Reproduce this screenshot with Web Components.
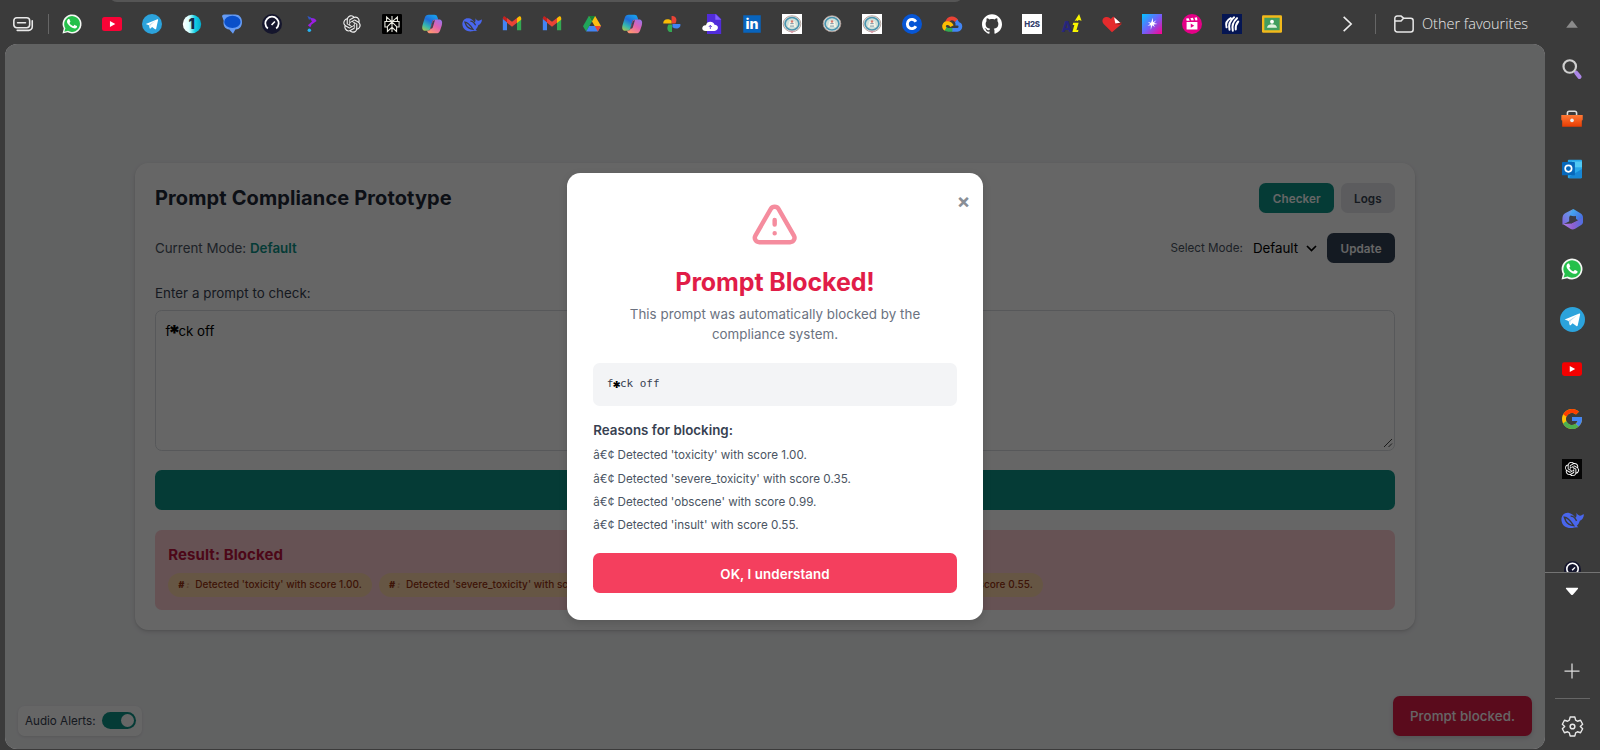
<!DOCTYPE html>
<html lang="en">
<head>
<meta charset="utf-8">
<title>Prompt Compliance Prototype</title>
<style>
html,body{margin:0;height:100%;background:#3b3b3b;overflow:hidden}
body{font-family:Inter,"Noto Sans",sans-serif}
</style>
</head>
<body>
<browser-window></browser-window>
<script>
const define=(name,html)=>{
  const t=document.createElement('template');
  t.innerHTML=html;
  customElements.define(name,class extends HTMLElement{
    constructor(){super();this.attachShadow({mode:'open'}).append(t.content.cloneNode(true));}
  });
};

const OPENAI='M22.2819 9.8211a5.9847 5.9847 0 0 0-.5157-4.9108 6.0462 6.0462 0 0 0-6.5098-2.9A6.0651 6.0651 0 0 0 4.9807 4.1818a5.9847 5.9847 0 0 0-3.9977 2.9 6.0462 6.0462 0 0 0 .7427 7.0966 5.98 5.98 0 0 0 .511 4.9107 6.051 6.051 0 0 0 6.5146 2.9001A5.9847 5.9847 0 0 0 13.2599 24a6.0557 6.0557 0 0 0 5.7718-4.2058 5.9894 5.9894 0 0 0 3.9977-2.9001 6.0557 6.0557 0 0 0-.7475-7.0729zm-9.022 12.6081a4.4755 4.4755 0 0 1-2.8764-1.0408l.1419-.0804 4.7783-2.7582a.7948.7948 0 0 0 .3927-.6813v-6.7369l2.02 1.1686a.071.071 0 0 1 .038.052v5.5826a4.504 4.504 0 0 1-4.4945 4.4944zm-9.6607-4.1254a4.4708 4.4708 0 0 1-.5346-3.0137l.142.0852 4.783 2.7582a.7712.7712 0 0 0 .7806 0l5.8428-3.3685v2.3324a.0804.0804 0 0 1-.0332.0615L9.74 19.9502a4.4992 4.4992 0 0 1-6.1408-1.6464zM2.3408 7.8956a4.485 4.485 0 0 1 2.3655-1.9728V11.6a.7664.7664 0 0 0 .3879.6765l5.8144 3.3543-2.0201 1.1685a.0757.0757 0 0 1-.071 0l-4.8303-2.7865A4.504 4.504 0 0 1 2.3408 7.872zm16.5963 3.8558L13.1038 8.364 15.1192 7.2a.0757.0757 0 0 1 .071 0l4.8303 2.7913a4.4944 4.4944 0 0 1-.6765 8.1042v-5.6772a.79.79 0 0 0-.407-.667zm2.0107-3.0231l-.142-.0852-4.7735-2.7818a.7759.7759 0 0 0-.7854 0L9.409 9.2297V6.8974a.0662.0662 0 0 1 .0284-.0615l4.8303-2.7866a4.4992 4.4992 0 0 1 6.6802 4.66zM8.3065 12.863l-2.02-1.1638a.0804.0804 0 0 1-.038-.0567V6.0742a4.4992 4.4992 0 0 1 7.3757-3.4537l-.142.0805L8.704 5.459a.7948.7948 0 0 0-.3927.6813zm1.0976-2.3654l2.602-1.4998 2.6069 1.4998v2.9994l-2.5974 1.4997-2.6067-1.4997Z';
const PHONE='M17.472 14.382c-.297-.149-1.758-.867-2.03-.967-.273-.099-.471-.148-.67.15-.197.297-.767.966-.94 1.164-.173.199-.347.223-.644.075-.297-.15-1.255-.463-2.39-1.475-.883-.788-1.48-1.761-1.653-2.059-.173-.297-.018-.458.13-.606.134-.133.298-.347.446-.52.149-.174.198-.298.298-.497.099-.198.05-.371-.025-.52-.075-.149-.669-1.612-.916-2.207-.242-.579-.487-.5-.669-.51-.173-.008-.371-.01-.57-.01-.198 0-.52.074-.792.372-.272.297-1.04 1.016-1.04 2.479 0 1.462 1.065 2.875 1.213 3.074.149.198 2.096 3.2 5.077 4.487.709.306 1.262.489 1.694.625.712.227 1.36.195 1.871.118.571-.085 1.758-.719 2.006-1.413.248-.694.248-1.289.173-1.413-.074-.124-.272-.198-.57-.347z';
const grad=(id,a,v='x1="0" y1="0" x2="1" y2="1"')=>`<linearGradient id="${id}" ${v}>${a.map((c,i)=>`<stop offset="${i/(a.length-1)}" stop-color="${c}"/>`).join('')}</linearGradient>`;
const seal=`<ellipse cx="12" cy="11.7" rx="10.6" ry="9.600" fill="#e3e6e4" stroke="#a8958f" stroke-width="1"/><ellipse cx="12" cy="11.7" rx="8.300" ry="7.500" fill="#cfe0da" stroke="#4a93ad" stroke-width="2"/><path d="M7 15.500 9 8.500h6l2 7z" fill="#f5f3e8"/><path d="M9.500 14.500h5M10 11.500h4" stroke="#7f9aa8" stroke-width="1.200"/><circle cx="12" cy="9" r="1.500" fill="#d97b6f"/>`;
/* Glyphs are drawn on a 24-unit square. */
const ICONS={
 tabs:'<g fill="none" stroke="#e8e8e8" stroke-width="1.900"><rect x="1" y="4.500" width="19" height="12" rx="3.500"/><path d="M5.500 10.500h9.500M5 19.600h13.800a4.200 4.200 0 0 0 4.300-4.300V8" stroke-linecap="round"/></g>',
 whatsapp:`<path d="M.6 23.500 2.100 17.500A11.400 11.400 0 1 1 6.700 22z" fill="#f5f8f4"/><path d="M2.800 21.300 4.100 17.200A9.500 9.500 0 1 1 7.200 20.200z" fill="#25c04b"/><path d="${PHONE}" fill="#fff" transform="translate(0 -.3)"/>`,
 youtube:'<rect x="0" y="3.500" width="24" height="17" rx="3" fill="#f80336"/><path d="m9.500 8.400 6.500 3.600-6.500 3.600z" fill="#fff"/>',
 youtubeside:'<rect x="0" y="3.800" width="24" height="16.500" rx="2.800" fill="#f40000"/><path d="m9.300 8.500 6.500 3.500-6.500 3.500z" fill="#fff"/>',
 telegram:'<circle cx="12" cy="12" r="12" fill="#2ca3dc"/><path d="M4.500 11.900 18.500 6.300c.7-.2 1 .1.800.9L17 17.700c-.2.800-.7.900-1.300.5l-3.600-2.700-1.900 1.900c-.5.400-.9.100-1-.400L8.300 13.400z" fill="#fff"/><path d="m9.700 16.500.4-3.100 6-5.200-7.500 4.700z" fill="#b9d9eb"/>',
 one:`<defs>${grad('g',['#fff','#d8ffff','#10cfe4','#05aacc'],'x1="0" y1="0" x2="1" y2="0"')}</defs><circle cx="12" cy="12" r="11" fill="url(#g)"/><text x="11.500" y="18.300" text-anchor="middle" font-family="Inter" font-weight="900" font-size="17" fill="#152848">1</text>`,
 messages:'<path d="M5 .5h11c5 0 8 4 8 9 0 5.500-3 9-8 9l-2.800 5.300-4.400-5.300C3 18 1 13 2 8L0 2.500C0 1 2 .5 5 .5z" fill="#659bf4"/><ellipse cx="12.500" cy="9.500" rx="9.800" ry="7.300" fill="#0a4fc9"/>',
 speed:'<circle cx="12" cy="12" r="12" fill="#15162d"/><path d="M7 17.400a8 8 0 1 1 10 0" fill="none" stroke="#fff" stroke-width="2.200"/><path d="m11.500 13.200 4-4.200" stroke="#fff" stroke-width="2"/>',
 question:`<defs>${grad('g',['#6535e9','#a21be0','#6b39ef'])}</defs><path d="M9.500 5C14 4.500 16.500 6 17.500 8.500L11.500 12.500l-1.500 3.500-3-2.500L12 9z" fill="url(#g)"/><path d="m6.500 2.500 4.500 1.700-2.500 3z" fill="#3156c4"/><circle cx="8.800" cy="19.500" r="2.100" fill="#25b4f2"/>`,
 openai:`<g transform="translate(1.500 1.500) scale(.875)"><path d="${OPENAI}" fill="#eee"/></g>`,
 openaibox:`<rect width="24" height="24" fill="#050505"/><g transform="translate(3.500 3.500) scale(.710)"><path d="${OPENAI}" fill="#fff"/></g>`,
 perplexity:'<rect width="24" height="24" rx="1.500" fill="#000"/><g fill="none" stroke="#e8e8df" stroke-width="1.300"><path d="M12 2.500v19M5.500 3.500v5.500h13V3.500L12 9.500zM5.500 9H3.500v6.500h3M18.500 9h2v6.500h-3M12 9.500l-5.500 5.500v6L12 16l5.500 5v-6z"/></g>',
 copilot:`<defs>${grad('a',['#1799ea','#216bd8','#34b7b0','#bdc840'],'x1=".6" y1="0" x2="0" y2="1"')}${grad('b',['#8d76f5','#e062b1','#ff9671'],'x1="1" y1="0" x2=".3" y2="1"')}</defs><path d="M8 1h7c2 0 3 1 3.600 3L19.500 7h-4c-2 0-3 .8-3.500 3l-2 7.500c-.5 1.700-1.500 2.500-3 2.500H3.500C.5 20-.5 17 .8 12.800L3.300 4.500C4 2.300 5.500 1 8 1z" fill="url(#a)"/><path d="M16 6.500h4.500c3.500 0 4.300 3 3.200 7.200l-2 6c-.8 2.300-2.400 3.500-4.700 3.500H9.500c-1.700 0-2.700-.9-3.400-3.200h.7c2 0 3-.8 3.500-2.700L12.400 9c.5-1.700 1.600-2.500 3.600-2.500z" fill="url(#b)"/><path d="m12.500 9.500-2.300 8c.8.500 2.200.300 2.800-1.500L15.500 7.500c-1.700 0-2.500.6-3 2z" fill="#474052"/>`,
 deepseek:'<path d="M.5 13C0 7.500 4 4.200 8.500 5.200c2.700.5 5.200 2.700 6.400 5 1.300-.4 1.600-2.700 1.100-5.200 1.300 1.800 2.200 2.700 3.700 3 1.700.1 2.500-1.200 4.300-1.500-.3 4-2.300 6-4.300 6.700-.8 2.300-1.700 4.100-3.200 5.300l1.500 1.500-4 .3C8 22 1.300 20 .5 13z" fill="#4966ed"/><path d="M3.500 9.700c3.500-.1 6.800 4.300 9.700 8.700-3-.4-6.700-2.300-8.200-5zM10 8.500c3-.2 5.200 2.800 6.300 5" fill="none" stroke="#3b3b3b" stroke-width="1.500"/>',
 gmail:'<path d="M1 5v14.500h5V10z" fill="#4285f4"/><path d="M18 9.500v10h5V5z" fill="#34a853"/><path d="m1 6 5 4v-5L3.500 3C2 2.400 1 3.500 1 6z" fill="#c5221f"/><path d="M6 4.800 12 9.300l6-4.500v5.800l-6 4.600-6-4.600z" fill="#ea4335"/><path d="M18 4.800 20 3.200C22 2 23 3.600 23 5v2l-5 3.800z" fill="#fbbc04"/>',
 drive:'<path d="M8.200 2.500h7.600L5 21 1.200 14.600z" fill="#20a55a"/><path d="m15.800 2.500 7 12h-7.600L8.200 2.500z" fill="#fdbd13"/><path d="M5 21 8.700 14.500h14.100L19 21z" fill="#4285f4"/><path d="M8.200 2.500h7.600L12 9z" fill="#188038"/><path d="m19 21-3.800-6.500h7.600z" fill="#ea4335"/>',
 photos:'<path d="M11.500 11.500V2.500c5-1 7.500 4 4.500 9z" fill="#e94335"/><path d="M12.500 12H22c1 5-4.500 7-9.500 4z" fill="#4285f4"/><path d="M12 12.500v9c-5.500 1-7-4.500-4.200-9z" fill="#34a853"/><path d="M11.500 11.500h-10c-.5-5 5-7 10-3.500z" fill="#fbbc04"/>',
 cloudfile:'<path d="M6 0h11l6 6v18H6z" fill="#512cda"/><path d="M16 0v7h7z" fill="#825fff"/><path d="M4.500 20.500c-7-1-4-8 .3-7C5.500 8 14 8 15 13c5.500 0 5.500 7 0 7.500z" fill="#fff"/><path d="M10 18v-4m-1.800 1.600L10 13.500l1.800 2.100" stroke="#5631ce" fill="none"/>',
 linkedin:'<rect x="1.500" y="1.500" width="21" height="21" fill="#0864bd"/><text x="12" y="18.500" text-anchor="middle" font-family="Inter" font-size="17" font-weight="800" fill="#fff">in</text>',
 sealbox:`<rect width="24" height="24" fill="#fff"/>${seal}<path d="m8 20 4 3 4-3" fill="#d79ba6"/>`,
 seal,
 coursera:'<circle cx="12" cy="12" r="12" fill="#0756d5"/><path d="M16.700 9.300a5.500 5.500 0 1 0 0 5.400" fill="none" stroke="#fff" stroke-width="3.500"/>',
 gcloud:'<g fill="none" stroke-width="4.500"><path d="M6 10c2-5.800 8.500-6.500 11.500-1.500" stroke="#ea4335"/><path d="M16.800 8.300c1.300 1 1.600 2 1.600 3.200 5.200 0 4.600 7.500 0 7.500H12" stroke="#4285f4"/><path d="M12.500 19H7.500c-2 0-3.200-1-4.500-2.500" stroke="#34a853"/><path d="M12 14.500C9 9 1.500 10.500 2.500 15.500c.3 1.500 1 2.300 1.700 2.700" stroke="#fbbc04"/></g>',
 github:'<path fill="#fff" d="M12 .297c-6.630 0-12 5.373-12 12 0 5.303 3.438 9.800 8.205 11.385.600.113.820-.258.820-.577 0-.285-.010-1.040-.015-2.040-3.338.724-4.042-1.610-4.042-1.610C4.422 18.070 3.633 17.700 3.633 17.700c-1.087-.744.084-.729.084-.729 1.205.084 1.838 1.236 1.838 1.236 1.070 1.835 2.809 1.305 3.495.998.108-.776.417-1.305.760-1.605-2.665-.300-5.466-1.332-5.466-5.930 0-1.310.465-2.380 1.235-3.220-.135-.303-.540-1.523.105-3.176 0 0 1.005-.322 3.300 1.230.960-.267 1.980-.399 3-.405 1.020.006 2.040.138 3 .405 2.280-1.552 3.285-1.230 3.285-1.230.645 1.653.240 2.873.120 3.176.765.840 1.230 1.910 1.230 3.220 0 4.610-2.805 5.625-5.475 5.920.420.360.810 1.096.810 2.220 0 1.606-.015 2.896-.015 3.286 0 .315.210.690.825.570C20.565 22.092 24 17.592 24 12.297c0-6.627-5.373-12-12-12"/>',
 h2s:'<rect width="24" height="24" fill="#fff"/><text x="12" y="15.500" text-anchor="middle" font-family="Inter" font-size="9.500" font-weight="800" letter-spacing="-.3" fill="#34406b">H2S</text>',
 ai:'<text x="-.5" y="21.500" font-family="Inter" font-size="17" font-weight="800" fill="#27267c">A</text><path d="m20.500 0 3 8-3.300-.7-2.200 1.500-.5-1.200-2.500 1z" fill="#f8f500"/><path d="M13.500 10.500h6.500l-2.700 9 2.500-.5-.6 2.500h-6.700l2.300-8.300h-2z" fill="#f8f500"/>',
 heart:'<path d="M12 22 2 12C-1 8 1 4 5 3.500c3-.3 4.500 1 5.500 2.500L13.500 3l10 9z" fill="#e42b2d"/><path d="m14.500 4 8.500 7.500h-7z" fill="#fff"/><path d="m15 12 9-2-2 3z" fill="#95221f"/>',
 spark:`<defs>${grad('g',['#00c6ff','#7060fb','#ff008e'])}</defs><rect width="24" height="24" fill="url(#g)"/><path d="m13 4.500.3 5.300 4-2.300-2.800 3.400 4 1.100-4.600.5 1.500 3.500-3-2.500-1.900 5.500.1-5.500-4.100.5 3.500-2-3-2.500 3.800 1z" fill="#fff"/>`,
 reels:'<circle cx="12" cy="12" r="12" fill="#e50087"/><path d="M5.500 9.500h13v9h-13zM5 5.500l3-.5 1.300 3H5.500zM10 5l3-.4 1.300 2.900-3 .4zM15 4.500l3-.5.500 3.500-2.300.3z" fill="#fff"/><path d="m10.500 11.500 4.200 2.500-4.200 2.500z" fill="#e50087"/>',
 stripes:'<rect width="24" height="24" fill="#051653"/><g fill="none" stroke="#fff" stroke-width="2.400" stroke-linecap="round"><path d="M10.500 5C6 7.500 4 11.500 5.500 16M14.500 4C9.500 8 7.500 13 9 19M18 5c-4.500 4-6.500 9-5 15M19.500 9c-2.500 3-3.500 6-3 9.500"/></g>',
 classroom:'<rect x="0" y="1.500" width="24" height="21" rx="1.500" fill="#f2b91b"/><rect x="2.800" y="4.500" width="18.400" height="15" fill="#419e5f"/><circle cx="12" cy="9.300" r="2.300" fill="#fff"/><path d="M6 16.500c.3-5.500 11.700-5.500 12 0z" fill="#e0f1df"/>',
 search:'<path d="m17 16.500 4 5" stroke="#ab86e6" stroke-width="5" stroke-linecap="round"/><circle cx="9.300" cy="9" r="7.500" fill="none" stroke="#cfcfcf" stroke-width="2.600"/>',
 briefcase:`<defs>${grad('g',['#ff7a36','#e73b02'],'x1="0" y1="0" x2="0" y2="1"')}</defs><path d="M7 8V5.500c0-1.500.7-2 2-2h6c1.300 0 2 .5 2 2V8" fill="none" stroke="#ddd" stroke-width="1.700"/><path d="M.3 7.500h23.400v5c0 .8-.5 1.200-1 1.200V20.500H1.300v-6.800c-.5 0-1-.4-1-1.200z" fill="url(#g)"/><circle cx="12" cy="13.500" r="2" fill="#e8eef1"/>`,
 outlook:'<rect x="7" y="1" width="17" height="22" rx="1" fill="#28a8ea"/><path d="M12 3h12v7H12z" fill="#50c9f5"/><path d="m9 21 15-9v10c0 .8-.4 1.200-1.200 1.200H9z" fill="#1687d6"/><rect x="0" y="3.500" width="15.500" height="16" rx="1" fill="#0768bb"/><circle cx="7.700" cy="11.500" r="3.900" fill="none" stroke="#fff" stroke-width="2"/>',
 m365:`<defs>${grad('a',['#5aa8ee','#8263db'],'x1="1" y1="0" x2="0" y2="1"')}${grad('b',['#b080ea','#8f5fd0','#4d6fe0'],'x1="0" y1="0" x2="1" y2="0"')}${grad('c',['#42b9f7','#4a56d7'])}</defs><path d="M13 0 4 4.500C1.500 6 .5 8 .5 11v7l8-4V9.500c0-1.500.5-2.200 2-3z" fill="url(#a)"/><path d="m13 0 8.500 5C23 6 24 7.500 24 9.500V16l-8-4.500V9L8.500 7z" fill="url(#c)"/><path d="m24 10-8 4-5.500 2.500L1 17l8.500 5.600c2 1 3.500 1 5.500-.1l6.500-3.800c2-1 2.500-2.500 2.500-4.700z" fill="url(#b)"/><path d="M8.500 9.500 16 8v5.500l-5.500 3-2-2.500z" fill="#3b3b46"/>`,
 google:'<g transform="scale(.500)"><path fill="#FFC107" d="M43.600 20.100H42V20H24v8h11.300C33.700 32.700 29.200 36 24 36c-6.600 0-12-5.400-12-12s5.400-12 12-12c3.100 0 5.800 1.200 8 3l5.700-5.700C34 6.100 29.300 4 24 4 13 4 4 13 4 24s9 20 20 20 20-9 20-20c0-1.300-.1-2.700-.4-3.900z"/><path fill="#FF3D00" d="m6.300 14.700 6.600 4.800C14.700 15.100 19 12 24 12c3.100 0 5.800 1.200 8 3l5.700-5.700C34 6.100 29.300 4 24 4 16.300 4 9.700 8.300 6.300 14.700z"/><path fill="#4CAF50" d="M24 44c5.200 0 9.900-2 13.400-5.200l-6.200-5.200C29.200 35.100 26.700 36 24 36c-5.200 0-9.600-3.300-11.300-7.900l-6.500 5C9.500 39.600 16.200 44 24 44z"/><path fill="#4285F4" d="M43.600 20.100H42V20H24v8h11.300c-.8 2.200-2.200 4.200-4.100 5.600l6.200 5.200C37 39.200 44 34 44 24c0-1.300-.1-2.700-.4-3.900z"/></g>',
 folder:'<path d="M1 5.500C1 3.700 2 2.500 4 2.500h4.500L11.500 5H20c2 0 3 1.200 3 3v10.500c0 2-1 3-3 3H4c-2 0-3-1-3-3zM1 8.300h7.500L11.500 5" fill="none" stroke="#e8e8e8" stroke-width="1.800"/>',
 chevron:'<path d="m8 3.500 9 8.500-9 8.500" fill="none" stroke="#eee" stroke-width="1.900"/>',
 plus:'<path d="M12 3v18M3 12h18" stroke="#ddd" stroke-width="1.500"/>',
 gear:'<path d="m9.300 1.200-.9 3.600-2 1.200-3.600-1.100L.4 9.400l2.700 2.600-2.700 2.600 2.400 4.500L6.400 18l2 1.200.9 3.600h5.400l.9-3.600 2-1.200 3.600 1.100 2.400-4.500-2.700-2.600 2.700-2.600-2.400-4.500L17.600 6l-2-1.200-.9-3.600z" fill="none" stroke="#e8e8e8" stroke-width="1.600" stroke-linejoin="round"/><circle cx="12" cy="12" r="2.700" fill="none" stroke="#e8e8e8" stroke-width="1.700"/>',
 up:'<path d="m5 16.500 7-9 7 9z" fill="#8b8b8b"/>',
 down:'<path d="M5 8.500c-.8-1 0-1.500.5-1.500h13c.5 0 1.300.5.500 1.500l-6 6.700c-.5.500-1.500.5-2 0z" fill="#fff"/>'
};
customElements.define('app-icon',class extends HTMLElement{
  connectedCallback(){
    const s=this.getAttribute('size')||20;
    (this.shadowRoot||this.attachShadow({mode:'open'})).innerHTML=`<style>:host{display:block;flex:none;width:${s}px;height:${s}px}svg{display:block;overflow:visible}</style><svg width="${s}" height="${s}" viewBox="0 0 24 24">${ICONS[this.getAttribute('name')]}</svg>`;
  }
});

define('favourites-bar',`<style>
:host{display:flex;align-items:center;height:44px;padding-top:3px;box-sizing:border-box;position:relative;color:#e9e9e9}
:host::before{content:"";position:absolute;left:109px;top:-10px;width:854px;height:12px;background:#555;border-radius:0 0 8px 8px}
.tabs{margin:1px 15px 0 13px}.rule{width:1px;height:20px;background:#666}
.list{display:flex;gap:20px;margin-left:13.400px}
.next{margin-left:54.600px}.r2{margin:0 18px 0 18px}
.label{font:300 14.500px "Open Sans","Noto Sans",sans-serif;margin-left:8px;width:107px;white-space:nowrap}
.up{margin-left:33px}
</style><app-icon class="tabs" name="tabs"></app-icon><div class="rule"></div>
<div class="list">${'whatsapp youtube telegram one messages speed question openai perplexity copilot deepseek gmail gmail drive copilot photos cloudfile linkedin sealbox seal sealbox coursera gcloud github h2s ai heart spark reels stripes classroom'.split(' ').map(n=>`<app-icon name="${n}"></app-icon>`).join('')}</div>
<app-icon class="next" name="chevron"></app-icon><div class="rule r2"></div><app-icon name="folder"></app-icon><span class="label">Other favourites</span><app-icon class="up" name="up"></app-icon>`);

define('side-bar',`<style>
:host{display:flex;flex-direction:column;align-items:center;width:55px}
.apps{height:528px;overflow:hidden}
.apps div{height:50px;display:flex;align-items:center;justify-content:center}
app-icon{margin-right:1px}
.line{align-self:stretch;height:1px;background:#747474}
.short{align-self:auto;width:35px;background:#666;margin:17px 0}
.add{margin-top:59px}
</style><div class="apps">${[['search',20],['briefcase',22],['outlook',20],['m365',21],['whatsapp',22],['telegram',25],['youtubeside',20],['google',24],['openaibox',20],['deepseek',23],['speed',17]].map(([n,s])=>`<div><app-icon name="${n}" size="${s}"></app-icon></div>`).join('')}</div>
<div class="line"></div><app-icon name="down" style="margin-top:9px"></app-icon><app-icon class="add" name="plus"></app-icon><div class="line short"></div><app-icon name="gear" size="21"></app-icon>`);

define('ui-button',`<style>
:host{display:flex;align-items:center;justify-content:center;box-sizing:border-box;height:30px;padding:1px 13.330px 0;border-radius:6.670px;background:var(--bg,#0d9488);color:var(--fg,#fff);font-weight:600;font-size:11.670px;letter-spacing:.08px;white-space:nowrap}
</style><slot></slot>`);

define('masked-letter',`<style>
:host{display:inline-block;position:relative;width:var(--w,8px);height:1em;color:#000}
span{position:absolute;left:50%;top:50%;transform:translate(-50%,var(--dy,-34%));font:900 var(--s,21px)/1 Inter,sans-serif}
</style><span><slot></slot></span>`);

define('compliance-card',`<style>
:host{display:flex;flex-direction:column;box-sizing:border-box;width:1280px;height:466.670px;padding:20px;border-radius:13.300px;background:#fff;box-shadow:0 2px 5px rgba(0,0,0,.12),0 1px 2px rgba(0,0,0,.08);font-size:13.330px;line-height:20px;color:#4b5563}
.row{display:flex;align-items:center;height:30px;margin-bottom:20px}
h1{margin:0 auto 0 0;font-size:20px;line-height:27px;font-weight:700;letter-spacing:.12px;color:#1f2937}
.mode{margin-right:auto}.mode b{font-weight:600;color:#0d9488}
.small{font-size:11.670px}
.select{display:flex;align-items:center;gap:8px;color:#000;margin:0 10px 0 10px}
label{color:#374151;margin-bottom:6.670px;letter-spacing:.04px}
.area{box-sizing:border-box;height:141px;border:1px solid #d9dce1;border-radius:6.670px;padding:10.500px 9.500px 9.500px;color:#000;display:flex;justify-content:space-between}
.area svg{align-self:flex-end;margin:0 -8px -8px 0}
.submit{height:40px;margin:19.300px 0 20px}
.result{background:#fecdd3;border-radius:6.670px;padding:13.330px}
h2{margin:0 0 6.670px;font-size:15px;line-height:23.330px;font-weight:700;letter-spacing:.08px;color:#be123c}
.chips{display:flex;gap:7px}
.chips span{display:flex;background:#fed7aa;color:#9a3412;border-radius:12px;padding:5px 10px;font-size:10px;line-height:13.330px;font-weight:500;letter-spacing:.050px;white-space:nowrap}
.chips i{width:17px;font-weight:900;font-size:9px}.chips i u{opacity:.3;text-decoration:none;margin-left:2px}
</style>
<div class="row"><h1>Prompt Compliance Prototype</h1><ui-button style="margin-right:6.670px">Checker</ui-button><ui-button style="--bg:#e5e7eb;--fg:#374151">Logs</ui-button></div>
<div class="row"><span class="mode">Current Mode: <b>Default</b></span><span class="small">Select Mode:</span>
<span class="select">Default<svg width="11" height="7" viewBox="0 0 11 7"><path d="m1 1 4.500 4.500L10 1" fill="none" stroke="#000" stroke-width="1.700"/></svg></span><ui-button style="--bg:#334155">Update</ui-button></div>
<label>Enter a prompt to check:</label>
<div class="area"><span>f<masked-letter>*</masked-letter>ck off</span><svg width="10" height="10"><path d="M1 9 9 1M5.500 9 9 5.500" stroke="#444"/></svg></div>
<ui-button class="submit"></ui-button>
<div class="result"><h2>Result: Blocked</h2><div class="chips">${["'toxicity' with score 1.00.","'severe_toxicity' with score 0.35.","'obscene' with score 0.99.","'insult' with score 0.55."].map(t=>`<span><i>#<u>:</u></i>Detected ${t}</span>`).join('')}</div></div>`);

define('audio-toggle',`<style>
:host{display:flex;align-items:center;gap:6.670px;box-sizing:border-box;height:30px;padding:0 6.670px;border-radius:6.670px;background:#fff;font-size:11.670px;color:#374151;box-shadow:0 1px 3px rgba(0,0,0,.1)}
i{display:flex;justify-content:flex-end;box-sizing:border-box;width:33.300px;height:16.700px;padding:1.700px;border-radius:9px;background:#0d9488}
i::after{content:"";width:13.300px;height:13.300px;border-radius:50%;background:#fff}
</style>Audio Alerts:<i></i>`);

define('toast-message',`<style>
:host{display:flex;align-items:center;box-sizing:border-box;height:40px;padding:0 16.670px;border-radius:6.670px;background:#e11d48;color:#fff;font-size:13.330px;font-weight:500;letter-spacing:.050px;box-shadow:0 2px 5px rgba(0,0,0,.15)}
</style><slot></slot>`);

define('blocked-dialog',`<style>
:host{position:relative;display:flex;flex-direction:column;box-sizing:border-box;width:416.670px;height:446.670px;padding:26.670px;border-radius:13.300px;background:#fff;font-size:13.330px;line-height:20px;color:#374151;box-shadow:0 3px 8px rgba(0,0,0,.15)}
.tri{align-self:center;display:block;opacity:.6}
h2{margin:14.330px 0 5.670px;text-align:center;font-size:25px;line-height:30px;font-weight:700;letter-spacing:-.12px;color:#e11d48}
p{margin:0 28px;padding-top:.5px;height:39.500px;letter-spacing:.04px;text-align:center;color:#6b7280}
.quote{box-sizing:border-box;height:43.330px;margin:20px 0 13.330px;padding:13.330px;background:#f3f4f6;border-radius:6.670px;font:11px/16.670px "DejaVu Sans Mono",monospace}
h3{margin:0 0 6.670px;font-size:13.330px;line-height:20px;font-weight:600}
ul{list-style:none;margin:1px 0 19px;padding:0;display:flex;flex-direction:column;gap:6.670px;font-size:11.670px;line-height:16.670px;color:#4b5563}
.ok{height:40px;font-size:13.330px;--bg:#f43f5e}
.x{position:absolute;right:13px;top:15px;font-size:20px;line-height:26px;font-weight:700;color:#898e96}
</style><span class="x">×</span>
<svg class="tri" width="53.330" height="53.330" viewBox="0 0 24 24" fill="none" stroke="#f0405e" stroke-width="2" stroke-linecap="round" stroke-linejoin="round"><path d="M12 9v2m0 4h.01m-6.938 4h13.856c1.540 0 2.502-1.667 1.732-3L13.732 4c-.770-1.333-2.694-1.333-3.464 0L3.340 16c-.770 1.333.192 3 1.732 3z"/></svg>
<h2>Prompt Blocked!</h2><p>This prompt was automatically blocked by the compliance system.</p>
<div class="quote">f<masked-letter style="--w:6.600px;--s:17px;--dy:-12%">*</masked-letter>ck off</div>
<h3>Reasons for blocking:</h3>
<ul><li>â€¢ Detected 'toxicity' with score 1.00.</li><li>â€¢ Detected 'severe_toxicity' with score 0.35.</li><li>â€¢ Detected 'obscene' with score 0.99.</li><li>â€¢ Detected 'insult' with score 0.55.</li></ul>
<ui-button class="ok">OK, I understand</ui-button>`);

define('page-view',`<style>
:host{position:relative;display:flex;align-items:center;justify-content:center;width:1540px;height:705px;margin-left:5px;border-radius:12px;overflow:hidden;background:#f3f4f6}
audio-toggle{position:absolute;left:13.300px;bottom:13.300px}
toast-message{position:absolute;right:13.300px;bottom:13.300px}
.overlay{position:absolute;inset:0;display:flex;align-items:center;justify-content:center;background:rgba(0,0,0,.6)}
</style><compliance-card></compliance-card><audio-toggle></audio-toggle><toast-message>Prompt blocked.</toast-message><div class="overlay"><blocked-dialog></blocked-dialog></div>`);

define('browser-window',`<style>
:host{display:flex;flex-direction:column;width:1600px;height:750px;overflow:hidden;background:#3b3b3b}
.body{display:flex;flex:1}
</style><favourites-bar></favourites-bar><div class="body"><page-view></page-view><side-bar></side-bar></div>`);
</script>
</body>
</html>
